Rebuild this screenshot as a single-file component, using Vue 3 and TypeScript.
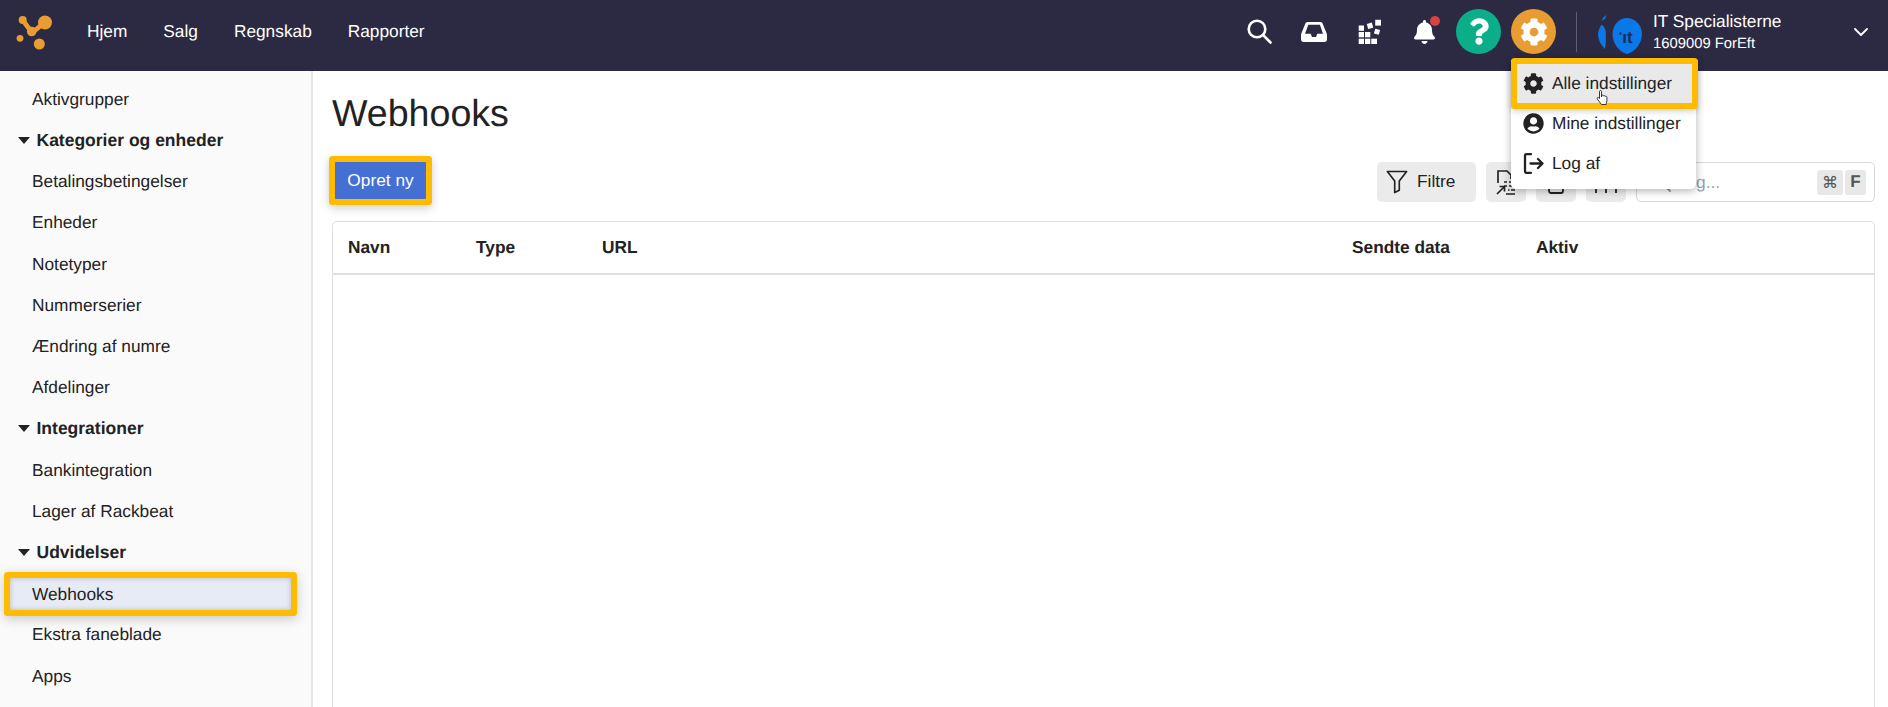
<script setup lang="ts">
interface NavRow { label: string; kind: 'item' | 'group' | 'active' }
const topNav: string[] = ['Hjem', 'Salg', 'Regnskab', 'Rapporter']
const rows: NavRow[] = [
  { label: 'Aktivgrupper', kind: 'item' },
  { label: 'Kategorier og enheder', kind: 'group' },
  { label: 'Betalingsbetingelser', kind: 'item' },
  { label: 'Enheder', kind: 'item' },
  { label: 'Notetyper', kind: 'item' },
  { label: 'Nummerserier', kind: 'item' },
  { label: 'Ændring af numre', kind: 'item' },
  { label: 'Afdelinger', kind: 'item' },
  { label: 'Integrationer', kind: 'group' },
  { label: 'Bankintegration', kind: 'item' },
  { label: 'Lager af Rackbeat', kind: 'item' },
  { label: 'Udvidelser', kind: 'group' },
  { label: 'Webhooks', kind: 'active' },
  { label: 'Ekstra faneblade', kind: 'item' },
  { label: 'Apps', kind: 'item' }
]
const gear = 'M487.4 315.7l-42.6-24.6c4.3-23.2 4.3-47 0-70.2l42.6-24.6c4.9-2.8 7.1-8.6 5.5-14-11.1-35.6-30-67.8-54.7-94.6-3.8-4.1-10-5.1-14.8-2.3L380.8 110c-17.9-15.4-38.5-27.3-60.8-35.1V25.8c0-5.6-3.9-10.5-9.4-11.7-36.7-8.2-74.3-7.8-109.2 0-5.5 1.2-9.4 6.1-9.4 11.7V75c-22.2 7.9-42.8 19.8-60.8 35.1L88.7 85.5c-4.9-2.8-11-1.9-14.8 2.3-24.7 26.7-43.6 58.9-54.7 94.6-1.7 5.4.6 11.2 5.5 14L67.3 221c-4.3 23.2-4.3 47 0 70.2l-42.6 24.6c-4.9 2.8-7.1 8.6-5.5 14 11.1 35.6 30 67.8 54.7 94.6 3.8 4.1 10 5.1 14.8 2.3l42.6-24.6c17.9 15.4 38.5 27.3 60.8 35.1v49.2c0 5.6 3.9 10.5 9.4 11.7 36.7 8.2 74.3 7.8 109.2 0 5.5-1.2 9.4-6.1 9.4-11.7v-49.2c22.2-7.9 42.8-19.8 60.8-35.1l42.6 24.6c4.9 2.8 11 1.9 14.8-2.3 24.7-26.7 43.6-58.9 54.7-94.6 1.5-5.5-.7-11.3-5.6-14.1zM256 336c-44.1 0-80-35.9-80-80s35.9-80 80-80 80 35.9 80 80-35.9 80-80 80z'
</script>

<template>
  <div class="page">
    <header class="top">
      <svg class="logo" viewBox="16 12 38 38" width="38" height="38">
        <g fill="#e89c32">
          <circle cx="22.700" cy="19" r="4" />
          <circle cx="45" cy="21.500" r="7" />
          <circle cx="20" cy="37.300" r="3.400" />
          <circle cx="39.300" cy="43" r="5.500" />
          <circle cx="31.700" cy="30.500" r="4.800" />
        </g>
        <path d="M23 19 C26 24 29 28 32 30.500 C36 30 38 26 44 22" fill="none" stroke="#e89c32" stroke-width="4.800" />
      </svg>
      <nav class="topnav">
        <a v-for="n in topNav" :key="n">{{ n }}</a>
      </nav>
      <div class="spacer"></div>
      <svg class="ico search" viewBox="0 0 25 25" width="25" height="25" fill="none" stroke="#fff">
        <circle cx="10" cy="10" r="8.300" stroke-width="2.600" />
        <path d="M16 16 L23.500 23.500" stroke-width="2.600" stroke-linecap="round" />
      </svg>
      <svg class="ico inbox" viewBox="0 0 26 20" width="26" height="20" fill="#fff">
        <path fill-rule="evenodd" d="M6.500 0h13c1 0 1.800.6 2.100 1.500L25.500 11c.3.700.5 1.400.5 2.200V17.500c0 1.400-1.100 2.500-2.500 2.500h-21C1.100 20 0 18.900 0 17.500v-4.300c0-.8.2-1.500.5-2.200L4.400 1.500C4.700.6 5.500 0 6.500 0zM7.300 2.700 4 11.700h5.700L11 15h4l1.300-3.300H22L18.900 2.700z" />
      </svg>
      <svg class="ico blocks" viewBox="0 0 24 25" width="24" height="25" fill="#fff">
        <rect x="0.700" y="6.500" width="5.300" height="5.300" />
        <rect x="0.700" y="13" width="5.300" height="5.300" />
        <rect x="7" y="13" width="5.300" height="5.300" />
        <rect x="0.700" y="19.700" width="5.300" height="5.300" />
        <rect x="7" y="19.700" width="5.300" height="5.300" />
        <rect x="13.300" y="19.700" width="5.700" height="5.300" />
        <rect x="9.400" y="4.200" width="5.200" height="5.200" transform="rotate(-15 12 6.800)" />
        <rect x="17.200" y="0.800" width="5.800" height="5.800" />
        <rect x="16.500" y="10.300" width="5" height="5" transform="rotate(15 19 12.800)" />
      </svg>
      <span class="bell">
        <svg viewBox="0 0 448 512" width="21" height="24" fill="#fff">
          <path d="M224 512c35.32 0 63.97-28.65 63.97-64H160.030c0 35.350 28.650 64 63.970 64zm215.390-149.710c-19.320-20.760-55.470-51.990-55.470-154.290 0-77.700-54.480-139.900-127.940-155.160V32c0-17.670-14.320-32-31.980-32s-31.980 14.330-31.980 32v20.840C118.560 68.100 64.080 130.300 64.080 208c0 102.300-36.150 133.530-55.470 154.290-6 6.450-8.660 14.160-8.610 21.710.11 16.400 12.980 32 32.100 32h383.800c19.120 0 32-15.600 32.100-32 .05-7.550-2.610-15.270-8.610-21.710z" />
        </svg>
        <i class="dot"></i>
      </span>
      <span class="round help">
        <svg viewBox="0 0 384 512" width="20" height="27" fill="#fff">
          <path d="M202.021 0C122.202 0 70.503 32.703 29.914 91.026c-7.363 10.580-5.093 25.086 5.178 32.874l43.138 32.709c10.373 7.865 25.132 6.026 33.253-4.148 25.049-31.381 43.630-49.449 82.757-49.449 30.764 0 68.816 19.799 68.816 49.631 0 22.552-18.617 34.134-48.993 51.164-35.423 19.860-82.299 44.576-82.299 106.405V320c0 13.255 10.745 24 24 24h72.471c13.255 0 24-10.745 24-24v-5.773c0-42.860 125.268-44.645 125.268-160.627C377.504 66.256 286.902 0 202.021 0zM192 373.459c-38.196 0-69.271 31.075-69.271 69.271 0 38.195 31.075 69.270 69.271 69.270s69.271-31.075 69.271-69.271-31.075-69.270-69.271-69.270z" />
        </svg>
      </span>
      <span class="round cog">
        <svg viewBox="0 0 512 512" width="28" height="28" fill="#fff"><path :d="gear" /></svg>
      </span>
      <span class="divider"></span>
      <svg class="it" viewBox="0 0 44 40" width="44" height="40">
        <path d="M8 3 C6 4.500 4 6.500 3.500 9 C5 8 6.500 7 7.500 6.500Z" fill="#0a78e6" />
        <path d="M3.700 12.700 C1.500 15 0 19 0 22 C0 28 3 33 7 37 C8 32 8 25 7.700 19 C7 16 5.500 14 3.700 12.700Z" fill="#0a78e6" />
        <path d="M29 6 C37 6 44 13 44 22 C44 31 37 40 29 42 C21 40 14.500 31 14.500 22 C14.500 13 21 6 29 6Z" fill="#0a78e6" />
        <text x="29.500" y="30.500" text-anchor="middle" font-size="17" font-weight="700" fill="#1c2b58" font-family="Liberation Sans, sans-serif">ıt</text>
        <rect x="21.500" y="20.300" width="1.800" height="2.400" fill="#1c2b58" />
      </svg>
      <div class="company">
        <div class="c1">IT Specialisterne</div>
        <div class="c2">1609009 ForEft</div>
      </div>
      <svg class="chev" viewBox="0 0 14 8" width="14" height="8" fill="none" stroke="#fff" stroke-width="1.800" stroke-linecap="round" stroke-linejoin="round">
        <path d="M1 1 L7 7 L13 1" />
      </svg>
    </header>

    <div class="body">
      <aside class="side">
        <div v-for="r in rows" :key="r.label" class="row" :class="r.kind">
          <span v-if="r.kind === 'group'" class="caret"></span>
          {{ r.label }}
        </div>
      </aside>

      <main class="main">
        <h1>Webhooks</h1>
        <div class="tools">
          <button class="primary">Opret ny</button>
          <div class="spacer"></div>
          <button class="tool filt">
            <svg viewBox="0 0 24 26" width="22" height="24" fill="none" stroke="#222" stroke-width="1.800" stroke-linejoin="round">
              <path d="M1.500 1.500 H22.500 L14.500 12 V22 L9.500 24.500 V12 Z" />
            </svg>
            Filtre
          </button>
          <button class="tool sq">
            <svg viewBox="0 0 20 25" width="20" height="25" fill="none" stroke="#222" stroke-width="1.700">
              <path d="M2 13 V1 H11 L15 5 V9" />
              <path d="M1 24 L8 17 M3.500 16.500 H8.500 V21.500" />
              <path d="M8 12h3M13 12h5M8 16h3M13 16h6M12 20h1.500M15 20h4M10 24h9" />
            </svg>
          </button>
          <button class="tool sq">
            <svg viewBox="0 0 16 23" width="16" height="23" fill="none" stroke="#222" stroke-width="1.800">
              <rect x="1" y="1" width="14" height="21" rx="2" />
            </svg>
          </button>
          <button class="tool sq">
            <svg viewBox="0 0 24 23" width="24" height="23" fill="none" stroke="#222" stroke-width="1.800">
              <path d="M2 2H22M2 2V22M12 2V22M22 2V22" />
            </svg>
          </button>
          <div class="searchbox">
            <svg class="glass" viewBox="0 0 20 20" width="20" height="20" fill="none" stroke="#8d93a0" stroke-width="1.800">
              <circle cx="8.500" cy="8.500" r="6.500" />
              <path d="M13.500 13.500 L19 19" stroke-linecap="round" />
            </svg>
            <span class="ph">Søg...</span>
            <kbd class="cmd">⌘</kbd><kbd>F</kbd>
          </div>
        </div>
        <section class="tbl">
          <div class="thead">
            <span>Navn</span>
            <span>Type</span>
            <span>URL</span>
            <span>Sendte data</span>
            <span>Aktiv</span>
          </div>
        </section>
      </main>
    </div>

    <div class="menu">
      <div class="mi on">
        <svg viewBox="0 0 512 512" width="21" height="21" fill="#222"><path :d="gear" /></svg>
        Alle indstillinger
      </div>
      <div class="mi">
        <svg viewBox="0 0 496 512" width="21" height="21" fill="#222">
          <path d="M248 8C111 8 0 119 0 256s111 248 248 248 248-111 248-248S385 8 248 8zm0 96c48.600 0 88 39.400 88 88s-39.400 88-88 88-88-39.400-88-88 39.400-88 88-88zm0 344c-58.700 0-111.300-26.600-146.500-68.200 18.800-35.400 55.600-59.800 98.500-59.800 2.400 0 4.800.4 7.100 1.100 13 4.200 26.600 6.900 40.900 6.900 14.300 0 28-2.700 40.900-6.900 2.300-.7 4.700-1.100 7.100-1.100 42.900 0 79.700 24.400 98.500 59.800C359.300 421.400 306.700 448 248 448z" />
        </svg>
        Mine indstillinger
      </div>
      <div class="mi">
        <svg viewBox="0 0 21 21" width="21" height="21" fill="none" stroke="#222" stroke-width="2.300" stroke-linecap="round" stroke-linejoin="round">
          <path d="M8 1.200 H3.500 Q2 1.200 2 2.700 V18.300 Q2 19.800 3.500 19.800 H8" />
          <path d="M7.500 10.500 H19.500 M15 6 L19.500 10.500 L15 15" />
        </svg>
        Log af
      </div>
      <svg class="hand" viewBox="0 0 14 16" width="14" height="16">
        <path d="M3.500 1.500c0-1.200 2-1.200 2 0V7l.3-1.500c.7-.6 1.600-.3 1.700.5.500-.7 1.500-.4 1.700.4.600-.5 1.600-.2 1.700.8.200 2 .1 4-.4 5.500-.2.700-.4 1.500-.4 1.800H5.500C4.500 13 2.500 11 1.300 9 .7 8 1.800 7 2.800 7.800l.7.700z" fill="#fff" stroke="#222" stroke-width=".9" stroke-linejoin="round" />
      </svg>
    </div>
  </div>
</template>

<style scoped>
.page { width: 1888px; height: 707px; overflow: hidden; position: relative; background: #fff; font-family: "Liberation Sans", Arial, sans-serif; color: #222; text-rendering: geometricPrecision; font-size: 17.300px; }
.top { height: 71px; background: #2c2a43; display: flex; align-items: center; padding: 0 20px 8px 16px; box-sizing: border-box; }
.logo { flex: none; margin-right: 33px; }
.topnav { display: flex; gap: 36px; color: #fff; }
.spacer { flex: 1; }
.ico { flex: none; }
.search { margin-right: 29px; }
.inbox { margin-right: 31px; }
.blocks { margin-right: 32px; }
.bell { position: relative; display: block; height: 24px; width: 21px; margin-right: 21px; }
.bell svg { display: block; }
.dot { position: absolute; width: 10px; height: 10px; background: #d94343; border-radius: 50%; left: 16px; top: -4px; }
.round { width: 45px; height: 45px; border-radius: 50%; display: flex; align-items: center; justify-content: center; flex: none; }
.help { background: #0bae88; margin-right: 10px; }
.cog { background: #e89c32; margin-right: 20px; }
.divider { width: 1px; height: 40px; background: #5f5e71; margin-right: 21px; flex: none; }
.it { flex: none; margin-right: 11px; overflow: visible; }
.company { color: #fff; width: 201px; flex: none; }
.c1 { font-size: 17.300px; line-height: 22px; }
.c2 { font-size: 14.800px; line-height: 20px; margin-top: 2px; }
.chev { flex: none; }

.body { display: flex; height: 636px; }
.side { width: 311px; flex: none; background: #fafafa; border-right: 2px solid #e6e6e6; padding-top: 7.900px; }
.row { height: 41.200px; line-height: 41px; padding-left: 32px; white-space: nowrap; }
.row.group { font-weight: 700; font-size: 17.500px; padding-left: 18px; display: flex; align-items: center; gap: 6.500px; }
.caret { width: 0; height: 0; border-left: 6.500px solid transparent; border-right: 6.500px solid transparent; border-top: 7px solid #222; }
.row.active { margin: 4.600px 20px 4.600px 10px; padding-left: 22px; background: #e7ebf5; height: 32px; line-height: 32px; border-radius: 1px; box-shadow: inset 0 0 5px rgba(30,40,90,.25), 0 0 0 6px #ffbb00, 0 3px 12px 6px rgba(0,0,0,.2); }
.main { flex: 1; padding: 0 13px 0 19px; min-width: 0; }
h1 { margin: 0; font-weight: 400; font-size: 37.600px; height: 91px; line-height: 84px; }
.tools { display: flex; align-items: flex-start; height: 40px; gap: 10px; }
button { font: inherit; border: 0; cursor: pointer; }
.primary { width: 91px; height: 37px; margin-left: 3px; background: #4470d4; color: #fff; border-radius: 1px; box-shadow: 0 0 0 6px #ffbb00, 0 3px 10px 6px rgba(0,0,0,.2); }
.tool { background: #ebebeb; border-radius: 5px; height: 40px; display: flex; align-items: center; justify-content: center; color: #222; }
.filt { width: 99px; gap: 9px; justify-content: flex-start; padding: 0 0 1px 9px; }
.sq { width: 40px; padding: 0; }
.searchbox { width: 239px; height: 40px; box-sizing: border-box; border: 1px solid #d6d8dc; border-radius: 5px; display: flex; align-items: center; gap: 2px; padding: 0 8px 0 14px; }
.glass { flex: none; margin-right: 1px; }
.ph { color: #9aa0ad; flex: 1; }
kbd { font-family: "Liberation Sans", sans-serif; width: 21px; height: 25px; background: #e8e8e8; border-radius: 3px; display: flex; align-items: center; justify-content: center; font-size: 17px; font-weight: 700; color: #555; }
.cmd { width: 26px; font-family: "DejaVu Sans", sans-serif; font-size: 16px; font-weight: 400; }
.tbl { margin-top: 19px; height: 500px; border: 1px solid #dfdfdf; border-radius: 5px 5px 0 0; }
.thead { height: 51px; border-bottom: 2px solid #e0e0e0; display: grid; grid-template-columns: 128px 126px 750px 184px 1fr; align-items: center; padding-left: 15px; font-weight: 700; }
.menu { position: absolute; left: 1511px; top: 60px; width: 185px; height: 129px; background: #fff; border-radius: 0 0 5px 5px; box-shadow: 0 2px 8px rgba(0,0,0,.3); }
.mi { height: 40px; display: flex; align-items: center; gap: 8px; padding-left: 12px; white-space: nowrap; }
.mi.on { background: #e9e9e9; box-shadow: 0 0 0 6px #ffbb00, 0 2px 6px 6px rgba(0,0,0,.2); height: 39.500px; margin: 3.500px 4.500px .5px 5.500px; padding-left: 6.500px; border-radius: 1px; }
.hand { position: absolute; left: 85px; top: 30px; }
</style>

<style>
html, body { margin: 0; overflow: hidden; }
</style>
